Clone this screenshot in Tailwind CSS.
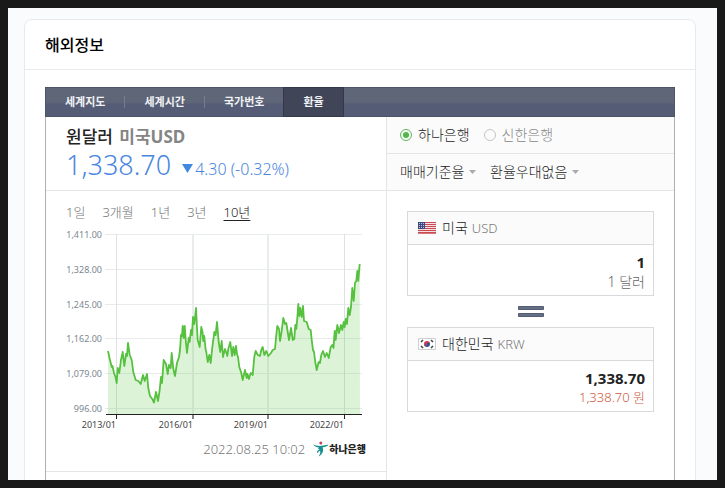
<!DOCTYPE html>
<html lang="ko">
<head>
  <meta charset="UTF-8">
  <meta name="viewport" content="width=device-width, initial-scale=1.0">
  <title>해외정보</title>
  <script src="https://cdn.jsdelivr.net/npm/@tailwindcss/browser@4"></script>
</head>
<body class="h-screen bg-[#191919] p-2 font-['Noto_Sans','Noto_Sans_CJK_KR',sans-serif] text-[#222]">
  <div class="h-full overflow-hidden bg-[#fafbfd] pt-[11px] pr-[21px] pl-4">
    <section class="rounded-t-lg border border-[#e6eaee] bg-white">
      <h1 class="h-[50px] border-b border-[#e9ecef] px-5 text-base leading-[50px] font-medium text-black">해외정보</h1>

      <div class="px-5 pt-[17px]">
        <!-- Section tabs -->
        <nav class="flex h-[30px] border border-[#4d5468] bg-linear-to-b from-[#5e6678] from-50% to-[#545c76] to-60% text-[11px] leading-7 font-bold text-[#f1f2f5]">
          <a href="#" class="px-[19px]">세계지도</a>
          <span class="my-auto h-3 w-px bg-[#757d90]"></span>
          <a href="#" class="px-[19px]">세계시간</a>
          <span class="my-auto h-3 w-px bg-[#757d90]"></span>
          <a href="#" class="px-[19px]">국가번호</a>
          <a href="#" class="-my-px border border-[#33384a] bg-[#404658] px-[19px]" aria-current="page">환율</a>
        </nav>

        <div class="grid grid-cols-[341px_1fr] border-x border-[#b0b0b2]">
          <!-- Rate and chart -->
          <div class="border-r border-[#e5e5e7]">
            <div class="h-[74px] border-b border-[#e5e5e7] px-5 pt-2">
              <h2 class="text-[17px] leading-6 font-medium">원달러 <span class="ml-0.5 font-bold text-[#858585]">미국USD</span></h2>
              <p class="flex items-baseline text-[#4a86e0]">
                <strong class="text-[27px] leading-8 font-light">1,338.70</strong>
                <svg class="ml-2.5 h-3 w-3" viewBox="0 0 12 12"><path d="M1 1h11L6.500 10z" fill="#3f8ae0"/></svg>
                <span class="ml-0.5 text-base leading-8 font-light">4.30 (-0.32%)</span>
              </p>
            </div>

            <div class="border-b border-[#e5e5e7] px-5 pt-[11px] pb-2">
              <div class="flex gap-[17px] text-[13px] leading-5 font-light text-[#777]">
                <button type="button">1일</button>
                <button type="button">3개월</button>
                <button type="button">1년</button>
                <button type="button">3년</button>
                <button type="button" class="text-[#222] underline underline-offset-3">10년</button>
              </div>

              <svg class="-ml-1 mt-1 h-[209px] w-[310px]" viewBox="62 226 310 209" role="img" aria-label="환율 차트 10년">
                <g stroke="#e9ecec">
                  <path d="M105 234.500H362M105 269.500H362M105 304.500H362M105 338.500H362M105 373.500H362M105 408.500H362"/>
                  <path d="M116.500 234V414M344.500 234V414" stroke="#dde1e4"/>
                  <path d="M193 234V414M268 234V414" stroke-width="2"/>
                </g>
                <polygon class="fill-[#54c23d]/20" points="108,414 108,351 109.500,358 111.700,367 114,373 116.700,383 117.700,368 119.300,373 121,360 122.700,352 124.300,366 126,357 128,343 129.700,355 131.700,360 133.300,372 135.700,380 138.300,381 140.700,384 143,375 144.700,381 147,374 148.300,388 150,396 152.300,399 154,402.500 156,392 158,401 159.700,390 161,377 162,383 163.700,360 166,364 167.700,374 169,365 170.700,368 171.700,353 173.300,369 175,376 177,363 179,357 180,350 181,335 182.700,326 184.700,330 187,353 188.700,338 191,332 193,317 194.300,324 196,308 197.700,340 199.700,347 201.300,327 203.700,338 205.700,350 207.700,362 209.300,355 210.700,363 212,350 214.300,332 217,322 218.700,342 220.300,352 223,355 227.300,356 230.300,346 234.700,355 236,349 238,357 239.300,367 242.700,380 245,370 249,379 252.700,375 254.300,357 257.700,355 260,356 262.700,350 268.300,356 271,353 275,349 276,338 277.300,326 280,341 283.300,318 286.300,323 289,340 291,328 294.300,339 295.300,325 298.300,304 301.700,317 303,306 304,321 306.700,322 310.700,330 313,350 316.700,370 318.700,362 323,351 325,357 328.700,358 330.700,347 332.300,345 334.700,331 337.300,325 341,328 345.700,321 348.300,311 351,307 352.300,288 353.700,301 356.300,281 357.300,271 359.700,264 360,414"/>
                <polyline fill="none" stroke="#56c03f" stroke-width="1.800" stroke-linejoin="round" points="108,351 109.500,358 111.700,367 112.500,366 114,373 115.500,377 116.700,383 117.700,368 119.300,373 121,360 122.700,352 124.300,366 126,354 127,356 128,343 129.700,355 131.700,360 133.300,372 135.700,380 138.300,381 140.700,384 143,375 144.700,381 146,377 147,374 148.300,388 150,396 152.300,399 154,402.500 156,392 158,401 159.700,390 161,377 162,383 163.700,360 166,364 167.700,374 169,365 170.700,368 171.700,353 173.300,369 175,376 177,363 179,357 180,350 181,335 182,336 182.700,326 183.700,338 184.700,326 185.700,340 187,353 188.700,338 189.700,342 191,330 192,335 193,317 194.300,324 196,308 197,328 197.700,340 199.700,347 201.300,327 202.700,333 203.200,341 204.200,336 205.700,350 206.300,352 207.700,362 209.300,355 210.700,363 212,350 214.300,332 215.700,335 217,322 218.700,342 220.300,352 221.700,341 223,357 225,349 227.300,356 228.300,349 230.300,342 232,356 233.300,347 234.700,355 236,346 237,354 238,357 239.300,367 241.300,373 242.700,380 245,370 246.700,378 247.500,374 249,379 250.700,373 252.700,375 254.300,357 255.700,351 257.700,355 260,356 261.300,350 262.700,347 264.300,355 266.300,351 268.300,356 271,353 272.700,350 275,349 276,338 277.300,326 279,329 280,341 281.700,331 283.300,318 285,324 286.300,323 289,340 291,328 292.700,340 294.300,339 295.300,325 296.300,329 297.300,319 298.300,304 299.300,316 300.300,308 301.700,317 303,306 304,321 306.700,322 308.700,329 310.700,330 311.700,340 313,350 314,352 315.300,362 316.700,370 318.700,362 320,363 321.300,355 323,351 325,357 326.700,353 328.700,358 330.700,347 332.300,345 333.500,348 334.700,331 335.700,340 337.300,325 339,333 341,325 342.300,330 343.700,322 344.700,327 345.700,319 347,324 348.300,308 349.700,315 351,307 352.300,288 353.700,301 355,283 356.300,281 357.300,271 358.300,281 359.700,264"/>
                <path d="M106 414.500H362M116.500 414V419M344.500 414V419" stroke="#222"/>
                <path d="M193 415V419M268 415V419" stroke="#888" stroke-width="2"/>
                <g class="fill-[#7b8791] text-[9px]" text-anchor="end">
                  <text x="102" y="238">1,411.00</text>
                  <text x="102" y="273">1,328.00</text>
                  <text x="102" y="308">1,245.00</text>
                  <text x="102" y="342">1,162.00</text>
                  <text x="102" y="377">1,079.00</text>
                  <text x="102" y="412">996.00</text>
                </g>
                <g class="fill-[#444] text-[9px]" text-anchor="end">
                  <text x="116" y="428">2013/01</text>
                  <text x="193" y="428">2016/01</text>
                  <text x="268" y="428">2019/01</text>
                  <text x="344" y="428">2022/01</text>
                </g>
              </svg>

              <div class="flex items-center justify-end text-[13px] leading-7 text-[#777]">
                <time class="font-light">2022.08.25 10:02</time>
                <svg class="ml-2 h-4 w-4" viewBox="0 0 16 16">
                  <circle cx="7.800" cy="1.900" r="1.500" fill="#c8415c"/>
                  <path d="M0 3.300C4 5.800 9 5.200 15.500 3.500C14.500 5.500 12 6 9.500 6.400C10.800 8.500 10.500 12.500 5.500 15.500C8 12 8 9.500 5 7.500L6 6.600C3.500 6.300 1 5.300 0 3.300z" fill="#168f91"/>
                  <path d="M7 9.500c-1.500-.3-2.800.8-2.200 2.200" fill="none" stroke="#168f91" stroke-width="1.200"/>
                </svg>
                <span class="text-[10px] font-black text-[#222]">하나은행</span>
              </div>
            </div>
            <div class="h-10"></div>
          </div>

          <!-- Converter -->
          <form>
            <div class="border-b border-[#e5e5e7] bg-[#fbfbfc] text-sm font-light">
              <div class="flex h-[37px] items-center border-b border-[#e5e5e7] px-[13px]">
                <input type="radio" id="hana" name="bank" checked class="mr-1.5 size-3 appearance-none rounded-full border border-[#5cba55] p-0.5 checked:bg-[#4fb948] checked:bg-clip-content">
                <label for="hana" class="mr-3.5">하나은행</label>
                <input type="radio" id="shinhan" name="bank" class="mr-1.5 size-3 appearance-none rounded-full border border-[#c4c4c4] p-0.5 checked:bg-[#4fb948] checked:bg-clip-content">
                <label for="shinhan" class="text-[#888]">신한은행</label>
              </div>
              <div class="flex h-9 items-center px-[13px]">
                <select aria-label="환율 기준" class="appearance-none">
                  <option>매매기준율</option>
                </select>
                <svg class="mr-3.5 ml-1 h-1 w-[7px]" viewBox="0 0 7 4"><path d="M0 0h7L3.500 4z" fill="#aaa"/></svg>
                <select aria-label="환율우대" class="appearance-none">
                  <option>환율우대없음</option>
                </select>
                <svg class="ml-1 h-1 w-[7px]" viewBox="0 0 7 4"><path d="M0 0h7L3.500 4z" fill="#aaa"/></svg>
              </div>
            </div>

            <div class="px-5 pt-5">
              <div class="border border-[#d9d9db]">
                <label for="usd" class="flex h-[33px] items-center border-b border-[#d9d9db] bg-[#fbfbfc] px-2.5 text-sm font-light">
                  <svg class="mr-1.5 h-3 w-[18px]" viewBox="0 0 18 12">
                    <path d="M0 0h18v12H0z" fill="#f4dfe0"/>
                    <path d="M0 .5h18M0 2.500h18M0 4.500h18M0 6.500h18M0 8.500h18M0 10.500h18M0 11.800h18" stroke="#c94a50"/>
                    <path d="M0 0h7v7H0z" fill="#3c4a80"/>
                    <path d="M1 1.500h6M1 3.500h6M1 5.500h6" stroke="#b8c0dc" stroke-dasharray="1 1"/>
                  </svg>
                  미국<span class="ml-1 text-[13px] text-[#777]">USD</span>
                </label>
                <div class="px-2 pt-2 pb-1 text-right">
                  <input id="usd" type="text" value="1" class="block w-full text-right text-[15px] leading-[19px] font-bold">
                  <p class="text-sm leading-[19px] font-light text-[#666]">1 달러</p>
                </div>
              </div>

              <svg class="mx-auto my-2.5 h-[11px] w-[26px]" viewBox="0 0 26 11">
                <path d="M.5 .5h25v3H.5zM.5 7.500h25v3H.5z" fill="#656f84" stroke="#545d74"/>
              </svg>

              <div class="border border-[#d9d9db]">
                <label for="krw" class="flex h-[33px] items-center border-b border-[#d9d9db] bg-[#fbfbfc] px-2.5 text-sm font-light">
                  <svg class="mr-1.5 h-3 w-[18px]" viewBox="0 0 18 12">
                    <path d="M.5 .5h17v11H.5z" fill="#fff" stroke="#cfcfcf"/>
                    <path d="M6 6a3 3 0 0 1 6 0z" fill="#cc3b48"/>
                    <path d="M6 6a3 3 0 0 0 6 0z" fill="#34509a"/>
                    <path d="M6 6a1.500 1.500 0 0 0 3 0z" fill="#cc3b48"/>
                    <path d="M9 6a1.500 1.500 0 0 1 3 0z" fill="#34509a"/>
                    <path d="M3 4l2-2M13 2l2 2M3 8l2 2M13 10l2-2" stroke="#444" stroke-width="1.600"/>
                  </svg>
                  대한민국<span class="ml-1 text-[13px] text-[#777]">KRW</span>
                </label>
                <div class="px-2 pt-2 pb-1 text-right">
                  <input id="krw" type="text" value="1,338.70" class="block w-full text-right text-[15px] leading-[19px] font-bold">
                  <p class="text-[13px] leading-[19px] font-light text-[#cc5a40]">1,338.70 원</p>
                </div>
              </div>
            </div>
          </form>
        </div>
      </div>
    </section>
  </div>
</body>
</html>
